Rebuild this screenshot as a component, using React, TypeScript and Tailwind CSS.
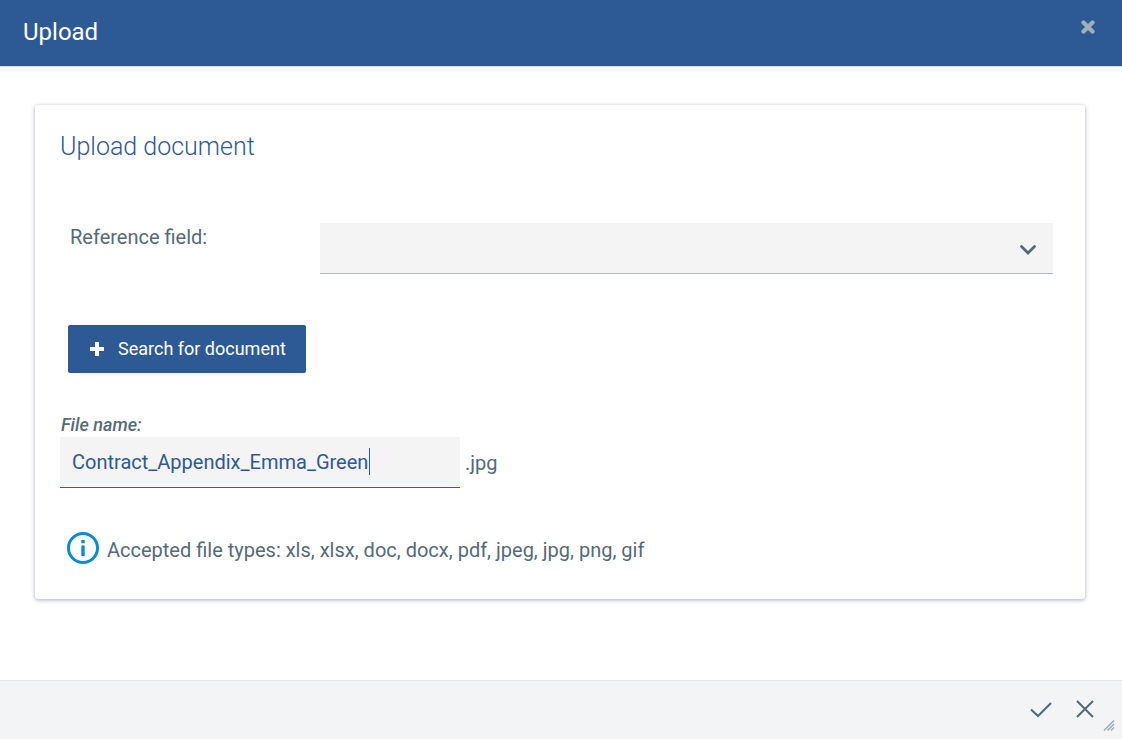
import React, { useState } from 'react';

const iconClass = 'block fill-none stroke-current';

const Header: React.FC = () => (
  <header className="flex h-[67px] items-start justify-between border-b border-[#d9d9de] bg-[#2d5a95] pl-[23px] pr-[18px] text-white">
    <h1 className="pt-4 text-2xl leading-8">Upload</h1>
    <button type="button" aria-label="Close" className="mt-4 p-1 text-[#a0b0b8]">
      <svg width="24" height="14" viewBox="0 0 24 14" className={iconClass} strokeWidth="4.2" strokeLinecap="round">
        <path d="M7.5 2.5l9 9M16.5 2.5l-9 9" />
      </svg>
    </button>
  </header>
);

const ReferenceField: React.FC = () => (
  <div className="mt-[59px] flex pl-[10px] pr-[7px]">
    <label htmlFor="reference" className="w-[250px] shrink-0 text-xl leading-7">
      Reference field:
    </label>
    <div className="relative flex-1">
      <select
        id="reference"
        defaultValue=""
        className="block h-[51px] w-full appearance-none border-b border-[#adb9c1] bg-[#f4f4f4] px-3 text-xl outline-none"
      >
        <option value=""></option>
      </select>
      <svg
        width="18"
        height="12"
        viewBox="0 0 18 12"
        className="pointer-events-none absolute right-4 top-[21px] fill-none stroke-[#4f6b78]"
        strokeWidth="2.8"
        strokeLinecap="round"
      >
        <path d="M2.5 2.500l6.500 6.500 6.500-6.500" />
      </svg>
    </div>
  </div>
);

const FileName: React.FC = () => {
  const [name, setName] = useState('Contract_Appendix_Emma_Green');
  const [showCaret, setShowCaret] = useState(true);

  return (
    <div className="mt-10">
      <label htmlFor="fileName" className="block pl-px text-lg leading-6 font-medium italic">
        File name:
      </label>
      <div className="flex items-center gap-[5px]">
        <div className="relative w-[400px]">
          <input
            id="fileName"
            type="text"
            value={name}
            onFocus={() => setShowCaret(false)}
            onChange={(e) => setName(e.target.value)}
            className="block h-[51px] w-full border-b border-[#0074a8] bg-[#f4f4f4] px-3 text-xl text-[#2d5a95] outline-none"
          />
          {showCaret && (
            <span className="pointer-events-none absolute left-[309px] top-[11px] h-[27px] w-px bg-[#2d5a95]" />
          )}
        </div>
        <span className="text-xl">.jpg</span>
      </div>
    </div>
  );
};

const Footer: React.FC = () => (
  <footer className="relative flex h-[59px] items-center justify-end gap-[14px] border-t border-[#e4e5e8] bg-[#f3f4f6] pb-[3px] pr-[22px] text-[#4f6b78]">
    <button type="button" aria-label="Confirm" className="p-[3px]">
      <svg width="24" height="24" viewBox="0 0 24 24" className={iconClass} strokeWidth="2">
        <path d="M2 12.5l7 6.500L22 6" />
      </svg>
    </button>
    <button type="button" aria-label="Cancel" className="p-[3px]">
      <svg width="24" height="24" viewBox="0 0 24 24" className={iconClass} strokeWidth="2">
        <path d="M4 4l16 16M20 4L4 20" />
      </svg>
    </button>
    <svg
      width="12"
      height="12"
      viewBox="0 0 12 12"
      className="absolute bottom-2 right-[7px] fill-none stroke-[#a3b0b8]"
      strokeWidth="1.600"
    >
      <path d="M1 11.5L11 1.5M4.500 11.500L11 5M8 11.500L11 8.500" />
    </svg>
  </footer>
);

const App: React.FC = () => {
  return (
    <div className="flex min-h-screen flex-col bg-white font-['Roboto',sans-serif] text-[#546b78]">
      <Header />
      <main className="flex-1 pb-20 pl-[35px] pr-[37px] pt-[38px]">
        <section className="rounded-[3px] px-[25px] pb-[35px] pt-[25px] shadow-[0_1px_4px_rgba(60,70,110,0.45)]">
          <h2 className="text-[25px] leading-[34px] font-light text-[#2d5a95]">Upload document</h2>
          <ReferenceField />
          <button
            type="button"
            className="ml-2 mt-[51px] flex h-12 items-center rounded-[2px] bg-[#2d5a95] pl-[22px] pr-5 text-lg text-white"
          >
            <svg width="14" height="14" viewBox="0 0 14 14" className="mr-[14px] fill-current">
              <path d="M5.500 0h3q.5 0 .5.5V5h4.500q.5 0 .5.5v3q0 .5-.5.5H9v4.500q0 .5-.5.5h-3q-.5 0-.5-.5V9H.5Q0 9 0 8.500v-3Q0 5 .5 5H5V.5q0-.5.5-.5z" />
            </svg>
            Search for document
          </button>
          <FileName />
          <div className="mt-11 flex items-center gap-2 pl-[7px]">
            <svg width="32" height="32" viewBox="0 0 32 32" className="shrink-0 fill-[#0a8ad6]">
              <circle cx="16" cy="16" r="14.500" className="fill-none stroke-[#0a8ad6]" strokeWidth="3" />
              <path d="M14.300 8h3.400v3.200h-3.400zM14.300 13.500h3.400v10.500h-3.400z" />
            </svg>
            <p className="pt-1 text-xl leading-7">
              Accepted file types: xls, xlsx, doc, docx, pdf, jpeg, jpg, png, gif
            </p>
          </div>
        </section>
      </main>
      <Footer />
    </div>
  );
};

export default App;
